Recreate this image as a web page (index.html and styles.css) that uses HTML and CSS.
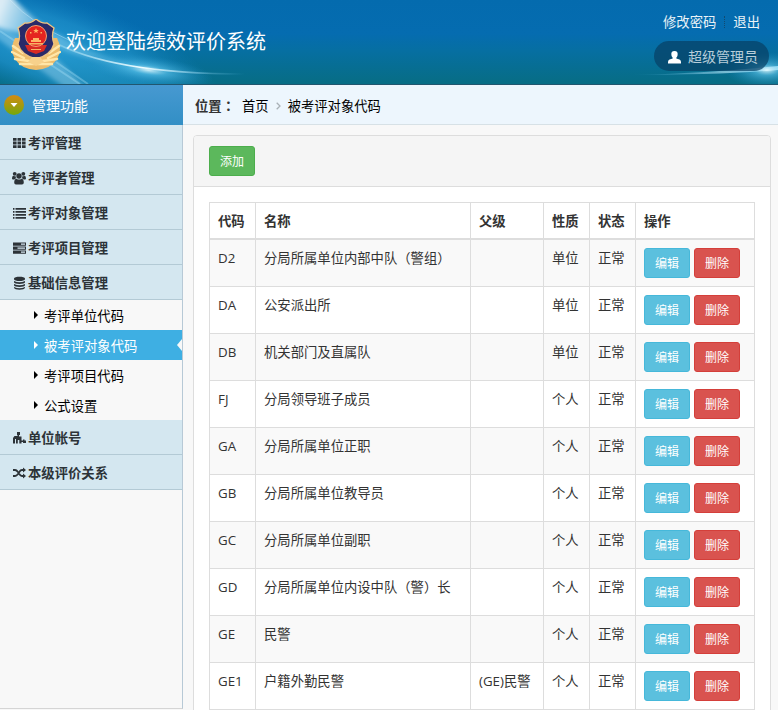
FILE: index.html
```html
<!DOCTYPE html>
<html lang="zh-CN">
<head>
    <meta charset="UTF-8">
    <title>欢迎登陆绩效评价系统</title>
    <link rel="stylesheet" href="styles.css">
</head>
<body>
    <header class="top">
        <svg class="top-bg" width="778" height="84" viewBox="0 0 778 84">
            <defs>
                <linearGradient id="beam" gradientUnits="userSpaceOnUse" x1="0" y1="10" x2="150" y2="70">
                    <stop offset="0" stop-color="#fff" stop-opacity=".85"/>
                    <stop offset=".25" stop-color="#a5dbf5" stop-opacity=".5"/>
                    <stop offset="1" stop-color="#4ab5e0" stop-opacity=".4"/>
                </linearGradient>
                <linearGradient id="tail" gradientUnits="userSpaceOnUse" x1="40" y1="0" x2="245" y2="0">
                    <stop offset="0" stop-color="#9adcf5" stop-opacity=".3"/>
                    <stop offset=".5" stop-color="#f0fdff"/>
                    <stop offset="1" stop-color="#5cc0ea" stop-opacity="0"/>
                </linearGradient>
                <linearGradient id="tail2" x1="0" y1="0" x2="1" y2="0">
                    <stop offset="0" stop-color="#5cc0ea" stop-opacity="0"/>
                    <stop offset="1" stop-color="#e8fbff"/>
                </linearGradient>
                <radialGradient id="wash">
                    <stop offset="0" stop-color="#289fd6" stop-opacity=".9"/>
                    <stop offset=".55" stop-color="#1f92cb" stop-opacity=".7"/>
                    <stop offset="1" stop-color="#1080be" stop-opacity="0"/>
                </radialGradient>
                <radialGradient id="glow">
                    <stop offset="0" stop-color="#e6fbff" stop-opacity=".9"/>
                    <stop offset=".3" stop-color="#5cc4ec" stop-opacity=".6"/>
                    <stop offset="1" stop-color="#1d8cc4" stop-opacity="0"/>
                </radialGradient>
                <filter id="soft" x="-20%" y="-20%" width="140%" height="140%"><feGaussianBlur stdDeviation="2"/></filter>
            </defs>
            <ellipse cx="50" cy="48" rx="180" ry="54" fill="url(#wash)" transform="rotate(18 50 48)"/>
            <g filter="url(#soft)">
                <path d="M-6 -6H10Q40 30 90 50Q120 62 150 70Q80 62 36 38L-6 26Z" fill="url(#beam)"/>
                <path d="M-6 22L56 58L88 90H68L-6 36Z" fill="#bfe9fb" opacity=".35"/>
            </g>
            <path d="M10 0Q32 24 75 43" stroke="#d9f3ff" stroke-opacity=".4" fill="none"/>
            <path d="M0 31L80 84M56 62L88 84" stroke="#aee6fa" stroke-opacity=".35" stroke-width="2" fill="none"/>
            <ellipse cx="148" cy="70" rx="66" ry="15" fill="url(#glow)" transform="rotate(8 148 70)"/>
            <path d="M50 40Q110 74 245 74" fill="none" stroke="url(#tail)" stroke-width="1.500"/>
            <path d="M630 75Q710 73 778 66V70Q720 75 630 75Z" fill="url(#tail2)"/>
            <ellipse cx="767" cy="70" rx="42" ry="18" fill="url(#glow)"/>
        </svg>
        <div class="brand">
            <svg class="emblem" width="50" height="52" viewBox="0 0 50 52">
                <path d="M4 19Q-2 30 4 40Q10 50 25 51Q40 50 46 40Q52 30 46 19Z" fill="#edbd6c"/>
                <path d="M2 27L12 34M1 33L13 39M4 40L18 42M9 45L23 45M48 27L38 34M49 33L37 39M46 40L32 42M41 45L27 45" stroke="#ffe6a8" stroke-width="2.500" stroke-linecap="round"/>
                <path d="M25 0Q31 5 36 4L43 9Q40 17 43 25Q40 36 25 40Q10 36 7 25Q10 17 7 9L14 4Q19 5 25 0Z" fill="#292a69" stroke="#edc181" stroke-width="1.300"/>
                <path d="M14 26L17 32L25 35L33 32L36 26Z" fill="#d92b24"/>
                <circle cx="25" cy="17" r="10.500" fill="#e52420" stroke="#f2a070" stroke-width="1"/>
                <path d="M25 9l.8 2h2l-1.600 1.200.6 2L25 13l-1.800 1.200.6-2-1.600-1.200h2zM20 21h10v2H20zM22 19h6v2h-6z" fill="#ffb566"/>
                <path d="M19 13h1.500v1.500H19zM29.500 13H31v1.500h-1.500zM18 24h14v1.500H18zM20 30h10v1H20z" fill="#f6b565"/>
                <path d="M21 38H29L33 43L25 47L17 43Z" fill="#f7d18b"/>
            </svg>
            <h1>欢迎登陆绩效评价系统</h1>
        </div>
        <div class="account">
            <p class="links"><a href="#">修改密码</a><i></i><a href="#">退出</a></p>
            <div class="user">
                <svg width="13" height="13" viewBox="0 0 13 13"><path d="M6.500 0C9 0 10 1.600 9.600 4C9.400 5.500 8.700 6.200 8.300 6.800V7.500L11.500 8.500Q13 9 13 11V12.500H0V11Q0 9 1.500 8.500L4.700 7.500V6.800C4.300 6.200 3.600 5.500 3.400 4C3 1.600 4 0 6.500 0Z" fill="#fff"/></svg>
                <span>超级管理员</span>
            </div>
        </div>
    </header>

    <div class="page">
        <aside class="sidebar">
            <div class="side-title">
                <svg width="20" height="20" viewBox="0 0 20 20">
                    <defs><linearGradient id="ball" x1="0" y1="0" x2="0" y2="1"><stop offset="0" stop-color="#d58a12"/><stop offset="1" stop-color="#75a80c"/></linearGradient></defs>
                    <circle cx="10" cy="10" r="10" fill="url(#ball)"/>
                    <path d="M6.500 8H13.500L10 12Z" fill="#fff"/>
                </svg>
                <span>管理功能</span>
            </div>
            <ul class="menu">
                <li><svg class="icon" viewBox="0 0 14 14"><path d="M1 2h3.600v2.800H1zM5.500 2h3.600v2.800H5.500zM10 2h3.600v2.800H10zM1 5.600h3.600v2.800H1zM5.500 5.600h3.600v2.800H5.500zM10 5.600h3.600v2.800H10zM1 9.200h3.600V12H1zM5.500 9.200h3.600V12H5.500zM10 9.200h3.600V12H10z"/></svg>考评管理</li>
                <li><svg class="icon" viewBox="0 0 14 14"><circle cx="2.700" cy="2.800" r="1.900"/><circle cx="11.300" cy="2.800" r="1.900"/><circle cx="7" cy="5" r="2.700"/><path d="M0 7.500Q0 4.800 1.400 4.800Q2.500 5.500 3.600 5Q3.500 6.500 4.200 7.200Q3 7.500 2.400 8.500H1Q0 8.500 0 7.500ZM14 7.500Q14 4.800 12.600 4.800Q11.500 5.500 10.400 5Q10.500 6.500 9.800 7.200Q11 7.500 11.600 8.500H13Q14 8.500 14 7.500ZM2.200 11.500Q2.200 7.700 4.600 7.700Q7 9.500 9.400 7.700Q11.800 7.700 11.800 11.500Q11.800 13.500 10 13.500H4Q2.200 13.500 2.200 11.500Z"/></svg>考评者管理</li>
                <li><svg class="icon" viewBox="0 0 14 14"><path d="M1 2h1.500v1.700H1zM3.500 2H14v1.700H3.500zM1 5h1.500v1.700H1zM3.500 5H14v1.700H3.500zM1 8h1.500v1.700H1zM3.500 8H14v1.700H3.500zM1 11h1.500v1.700H1zM3.500 11H14v1.700H3.500z"/></svg>考评对象管理</li>
                <li><svg class="icon" viewBox="0 0 14 14"><path fill-rule="evenodd" d="M1 1.500h13v3.200H1zM9 2.500v1.200h4V2.500zM1 5.500h13v3.200H1zM5.500 6.500v1.200H13V6.500zM1 9.500h13v3.200H1zM9 10.500v1.200h4v-1.200z"/></svg>考评项目管理</li>
                <li><svg class="icon" viewBox="0 0 14 14"><path d="M2 2.500C2 0 13 0 13 2.500V3.200C13 5.600 2 5.600 2 3.200ZM2 4.900Q7.500 7.500 13 4.900V6.200C13 8.500 2 8.500 2 6.200ZM2 7.900Q7.500 10.500 13 7.900V9.200C13 11.500 2 11.500 2 9.200ZM2 10.900Q7.500 13.500 13 10.900V11.800C13 14.400 2 14.400 2 11.800Z"/></svg>基础信息管理</li>
            </ul>
            <ul class="submenu">
                <li>考评单位代码</li>
                <li class="active">被考评对象代码</li>
                <li>考评项目代码</li>
                <li>公式设置</li>
            </ul>
            <ul class="menu">
                <li><svg class="icon" viewBox="0 0 14 14"><path d="M5 1h3v3H7v1.500h2.500V9.500H11V8.500h1.500v1H14V12h-3v-1H9.500v1.500H7.300V9H5.800v3.500H4V8H3v4.500H1V7l1.500-2H5.500V4H5z"/></svg>单位帐号</li>
                <li><svg class="icon" viewBox="0 0 14 14"><path d="M1 4H3Q4.500 4 6 6L7.500 8.300Q8.500 10 10 10H12M1 10H3Q4.500 10 6 8L7.500 5.700Q8.500 4 10 4H12" fill="none" stroke="#2c3338" stroke-width="1.800"/><path d="M11 1.500L14 4L11 6.500ZM11 7.500L14 10L11 12.500Z"/></svg>本级评价关系</li>
            </ul>
        </aside>

        <main class="content">
            <div class="place">
                <b>位置<span class="punct" lang="zh-TW">：</span></b>
                <a href="#">首页</a>
                <svg width="5" height="8" viewBox="0 0 5 8"><path d="M.7.7L4 4L.7 7.300" fill="none" stroke="#a9b1b6" stroke-width="1.300"/></svg>
                <a href="#">被考评对象代码</a>
            </div>
            <div class="panel">
                <div class="panel-heading"><button class="btn btn-add">添加</button></div>
                <div class="panel-body">
                    <table>
                        <colgroup><col class="c-code"><col class="c-name"><col class="c-parent"><col class="c-small"><col class="c-small"><col class="c-action"></colgroup>
                        <thead>
                            <tr><th>代码</th><th>名称</th><th>父级</th><th>性质</th><th>状态</th><th>操作</th></tr>
                        </thead>
                        <tbody>
                            <tr><td>D2</td><td>分局所属单位内部中队<span class="punct" lang="zh-TW">（</span>警组<span class="punct" lang="zh-TW">）</span></td><td></td><td>单位</td><td>正常</td><td><div class="actions"><button class="btn btn-edit">编辑</button><button class="btn btn-del">删除</button></div></td></tr>
                            <tr><td>DA</td><td>公安派出所</td><td></td><td>单位</td><td>正常</td><td><div class="actions"><button class="btn btn-edit">编辑</button><button class="btn btn-del">删除</button></div></td></tr>
                            <tr><td>DB</td><td>机关部门及直属队</td><td></td><td>单位</td><td>正常</td><td><div class="actions"><button class="btn btn-edit">编辑</button><button class="btn btn-del">删除</button></div></td></tr>
                            <tr><td>FJ</td><td>分局领导班子成员</td><td></td><td>个人</td><td>正常</td><td><div class="actions"><button class="btn btn-edit">编辑</button><button class="btn btn-del">删除</button></div></td></tr>
                            <tr><td>GA</td><td>分局所属单位正职</td><td></td><td>个人</td><td>正常</td><td><div class="actions"><button class="btn btn-edit">编辑</button><button class="btn btn-del">删除</button></div></td></tr>
                            <tr><td>GB</td><td>分局所属单位教导员</td><td></td><td>个人</td><td>正常</td><td><div class="actions"><button class="btn btn-edit">编辑</button><button class="btn btn-del">删除</button></div></td></tr>
                            <tr><td>GC</td><td>分局所属单位副职</td><td></td><td>个人</td><td>正常</td><td><div class="actions"><button class="btn btn-edit">编辑</button><button class="btn btn-del">删除</button></div></td></tr>
                            <tr><td>GD</td><td>分局所属单位内设中队<span class="punct" lang="zh-TW">（</span>警<span class="punct" lang="zh-TW">）</span>长</td><td></td><td>个人</td><td>正常</td><td><div class="actions"><button class="btn btn-edit">编辑</button><button class="btn btn-del">删除</button></div></td></tr>
                            <tr><td>GE</td><td>民警</td><td></td><td>个人</td><td>正常</td><td><div class="actions"><button class="btn btn-edit">编辑</button><button class="btn btn-del">删除</button></div></td></tr>
                            <tr><td>GE1</td><td>户籍外勤民警</td><td>(GE)民警</td><td>个人</td><td>正常</td><td><div class="actions"><button class="btn btn-edit">编辑</button><button class="btn btn-del">删除</button></div></td></tr>
                        </tbody>
                    </table>
                </div>
            </div>
        </main>
    </div>
</body>
</html>
```
FILE: styles.css
```css
* {
    box-sizing: border-box;
    margin: 0;
    padding: 0;
}
body {
    height: 710px;
    overflow: hidden;
    background-color: #f8f8f8;
    color: #333;
    font-family: "Open Sans", "Noto Sans CJK SC", sans-serif;
    font-size: 13.33px;
    line-height: 20px;
}
ul {
    list-style: none;
}
a {
    color: inherit;
    text-decoration: none;
}
svg {
    display: block;
    flex: none;
}
/* 全角标点居中 */
.punct {
    font-family: "Noto Sans CJK TC", sans-serif;
    line-height: 1;
}

/* 顶部 */
.top {
    position: relative;
    display: flex;
    justify-content: space-between;
    height: 85px;
    border-bottom: 1px solid #21566f;
    background: linear-gradient(#046bae 0, #056cb0 40%, #066fa2 60%, #076d84 100%);
    color: #fff;
}
.top-bg {
    position: absolute;
    top: 0;
    left: 0;
}
.brand {
    position: relative;
    display: flex;
    align-items: flex-start;
    padding: 19px 0 0 11px;
}
.brand h1 {
    margin-left: 5px;
    font-size: 20px;
    font-weight: normal;
    line-height: 46px;
}
.account {
    position: relative;
    display: flex;
    flex-direction: column;
    align-items: flex-end;
    padding: 12px 9px 0 0;
}
.links {
    display: flex;
    align-items: center;
    margin-right: 9px;
    color: #e9f2f7;
}
.links i {
    height: 12px;
    margin: 0 8px;
    border-left: 1px dotted #124a70;
}
.user {
    display: flex;
    align-items: center;
    width: 115px;
    height: 30px;
    margin-top: 9px;
    padding: 2px 0 0 14px;
    border-radius: 15px;
    background-color: rgba(7, 63, 100, .7);
    color: #b8ceda;
    font-size: 14px;
}
.user span {
    margin-left: 7px;
}

.page {
    display: flex;
    height: 625px;
}

/* 左侧菜单 */
.sidebar {
    width: 183px;
    height: 624px;
    border-right: 1px solid #b7c9d6;
    border-bottom: 1px solid #d5d5d5;
}
.side-title {
    display: flex;
    align-items: center;
    width: 183px;
    height: 40px;
    padding-left: 4px;
    background: linear-gradient(#4799d1, #328fc5);
    color: #fff;
    font-size: 14px;
}
.side-title span {
    margin: 2px 0 0 8px;
}
.menu li {
    display: flex;
    align-items: center;
    height: 35px;
    padding: 2px 0 0 12px;
    border-bottom: 1px solid #b3cad5;
    background-color: #d4e7f0;
    color: #2c3338;
    font-weight: bold;
}
.icon {
    width: 14px;
    height: 14px;
    margin-right: 2px;
    fill: #2c3338;
}
.submenu li {
    position: relative;
    display: flex;
    align-items: center;
    height: 30px;
    padding: 2px 0 0 34px;
    color: #000;
}
.submenu li::before {
    content: "";
    margin: -3px 6px 0 0;
    border: 4px solid transparent;
    border-left-color: currentColor;
    border-right: 0;
}
.submenu .active {
    background-color: #3eafe3;
    color: #fff;
}
.submenu .active::after {
    content: "";
    position: absolute;
    top: 9px;
    right: 0;
    border: 6px solid transparent;
    border-right: 5px solid #f8f8f8;
    border-left: 0;
}

/* 右侧内容 */
.content {
    flex: 1;
    min-width: 0;
}
.place {
    display: flex;
    align-items: center;
    height: 40px;
    padding: 2px 0 0 12px;
    border-bottom: 1px solid #d7e1e6;
    background-color: #edf6fd;
    color: #000;
}
.place b {
    color: #333;
}
.place a:first-of-type {
    margin: 0 7px;
}
.place a:last-child {
    margin-left: 7px;
}
.panel {
    width: 578px;
    height: 600px;
    margin: 10px 0 0 10px;
    border: 1px solid #ddd;
    border-radius: 4px;
    background-color: #fff;
}
.panel-heading {
    height: 51px;
    padding: 10px 15px;
    border-bottom: 1px solid #ddd;
    border-radius: 3px 3px 0 0;
    background-color: #f5f5f5;
}
.panel-body {
    padding: 15px;
}
table {
    width: 546px;
    border-collapse: collapse;
    table-layout: fixed;
}
.c-code, .c-small {
    width: 46px;
}
.c-name {
    width: 215px;
}
.c-parent {
    width: 73px;
}
.c-action {
    width: 119px;
}
th, td {
    padding: 8px;
    border: 1px solid #ddd;
    text-align: left;
    vertical-align: top;
    white-space: nowrap;
}
th {
    padding-bottom: 7px;
    border-bottom-width: 2px;
}
td {
    height: 47px;
}
tbody tr:nth-child(odd) {
    background-color: #f9f9f9;
}
.actions {
    display: flex;
    gap: 4px;
}
.btn {
    display: block;
    width: 46px;
    height: 30px;
    padding-top: 2px;
    border: 1px solid;
    border-radius: 3px;
    color: #fff;
    font-family: inherit;
    font-size: 12px;
    line-height: 18px;
}
.btn-add {
    border-color: #4cae4c;
    background-color: #5cb85c;
}
.btn-edit {
    border-color: #46b8da;
    background-color: #5bc0de;
}
.btn-del {
    border-color: #d43f3a;
    background-color: #d9534f;
}
```
